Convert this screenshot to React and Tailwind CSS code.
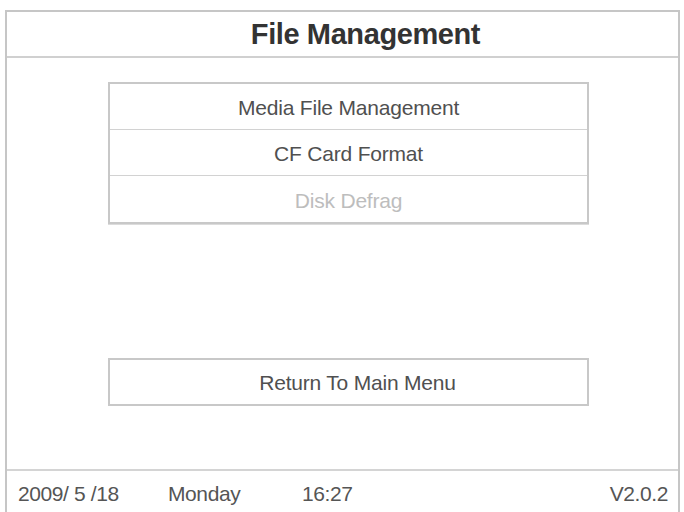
import React from 'react';

const menuItems = [
  { label: 'Media File Management', enabled: true },
  { label: 'CF Card Format', enabled: true },
  { label: 'Disk Defrag', enabled: false },
];

const MenuRow = ({ label, enabled, last }) => (
  <div
    className={`h-[46px] flex items-center justify-center pt-[3px] text-[21px] tracking-[-0.2px] ${
      enabled ? 'text-[#505050]' : 'text-[#bdbdbd]'
    } ${last ? '' : 'border-b border-[#d2d2d2]'}`}
  >
    {label}
  </div>
);

export default function App() {
  return (
    <div
      className="w-[684px] h-[512px] bg-white overflow-hidden pt-[10px] pl-[5px] pr-[4px]"
      style={{ fontFamily: '"Liberation Sans", Arial, sans-serif' }}
    >
      <div className="h-[520px] border-2 border-b-0 border-[#c6c6c6] flex flex-col">
        {/* title bar */}
        <div className="h-[46px] shrink-0 border-b-2 border-[#d0d0d0] flex items-center justify-center pl-[46px] pt-[2px]">
          <span className="text-[29px] font-bold text-[#333] tracking-[-0.4px]">File Management</span>
        </div>

        {/* menu area */}
        <div className="h-[411px] shrink-0 pl-[101px] pr-[89px] pt-[24px] flex flex-col">
          <div className="border-2 border-[#c8c8c8] shadow-[0_1px_0_#dcdcdc] bg-white">
            {menuItems.map((item, i) => (
              <MenuRow key={item.label} {...item} last={i === menuItems.length - 1} />
            ))}
          </div>

          <div className="mt-[134px] h-[48px] border-2 border-[#c8c8c8] flex items-center justify-center pl-[18px] pt-[2px] text-[21px] text-[#505050] tracking-[-0.2px]">
            Return To Main Menu
          </div>
        </div>

        {/* status bar */}
        <div className="h-[42px] shrink-0 border-t-2 border-[#d4d4d4] flex items-center pl-[11px] pr-[10px] pt-[6px] text-[21px] text-[#555] tracking-[-0.4px]">
          <span className="w-[150px]">2009/ 5 /18</span>
          <span className="w-[134px]">Monday</span>
          <span>16:27</span>
          <span className="ml-auto">V2.0.2</span>
        </div>
      </div>
    </div>
  );
}
